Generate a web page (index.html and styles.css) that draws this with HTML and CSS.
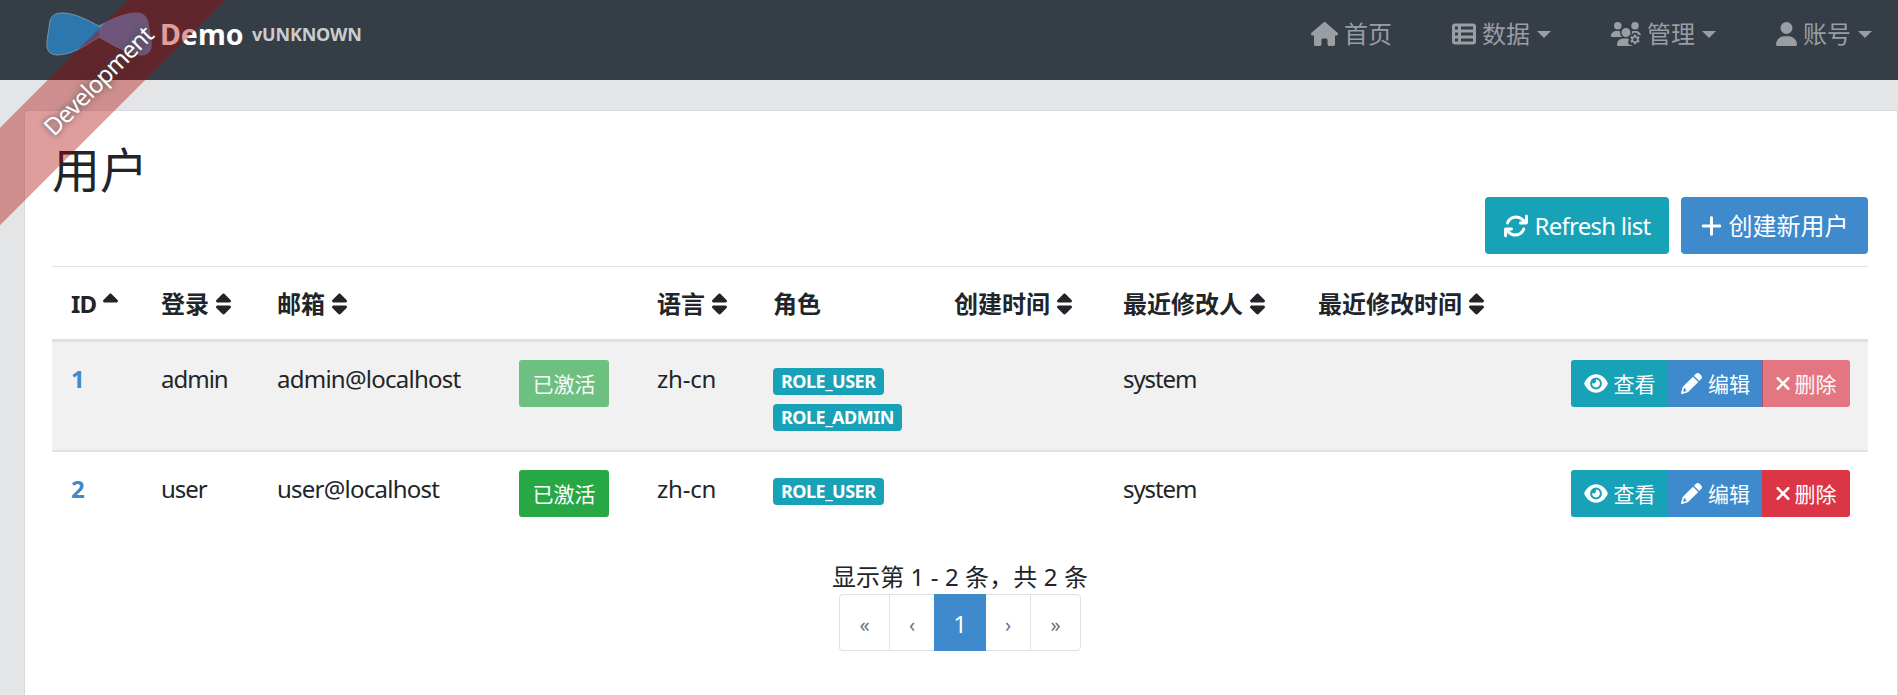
FILE: index.html
```html
<!DOCTYPE html>
<html lang="zh-CN">
<head>
<meta charset="utf-8">
<title>用户</title>
<link rel="stylesheet" href="styles.css">
</head>
<body>
<svg class="defs" aria-hidden="true">
  <symbol id="home" viewBox="0 0 576 512"><path d="M575.8 255.5c0 18-15 32.1-32 32.1h-32l.7 160.2c0 2.7-.2 5.4-.5 8.1V472c0 22.1-17.9 40-40 40H456c-1.1 0-2.2 0-3.3-.1c-1.4 .1-2.8 .1-4.2 .1H416 392c-22.1 0-40-17.9-40-40V448 384c0-17.7-14.3-32-32-32H256c-17.7 0-32 14.3-32 32v64 24c0 22.1-17.9 40-40 40H160 128.1c-1.5 0-3-.1-4.5-.2c-1.2 .1-2.4 .2-3.6 .2H104c-22.1 0-40-17.9-40-40V360c0-.9 0-1.9 .1-2.8V287.6H32c-18 0-32-14-32-32.1c0-9 3-17 10-24L266.4 8c7-7 15-8 22-8s15 2 21 7L564.8 231.5c8 7 12 15 11 24z"/></symbol>
  <symbol id="list" viewBox="0 0 512 512"><path fill-rule="evenodd" d="M64 32H448a64 64 0 0 1 64 64V416a64 64 0 0 1-64 64H64a64 64 0 0 1-64-64V96A64 64 0 0 1 64 32zM64 96v64h64V96zM192 96v64h256V96zM64 224v64h64V224zM192 224v64h256V224zM64 352v64h64V352zM192 352v64h256V352z"/></symbol>
  <symbol id="users" viewBox="0 0 640 512"><path d="M144 160A80 80 0 1 0 144 0a80 80 0 1 0 0 160zm368 0A80 80 0 1 0 512 0a80 80 0 1 0 0 160zM0 298.700C0 310.400 9.600 320 21.300 320H234.700c.200 0 .400 0 .700 0c-26.600-23.500-43.300-57.800-43.300-96c0-7.600 .700-15 1.900-22.300c-13.600-6.300-28.700-9.700-44.600-9.700H106.700C47.800 192 0 239.800 0 298.700zM320 320c24 0 45.900-8.800 62.700-23.300c2.500-3.700 5.200-7.300 8-10.700c2.700-3.300 5.700-6.100 9-8.300C410 262.300 416 243.900 416 224c0-53-43-96-96-96s-96 43-96 96s43 96 96 96zm65.400 60.200c-10.300-5.900-18.100-16.200-20.800-28.200H261.300C187.700 352 128 411.700 128 485.300c0 14.700 11.900 26.700 26.700 26.700H455.200c-2.100-5.200-3.200-10.900-3.200-16.400v-3c-1.300-.700-2.700-1.500-4-2.300l-2.600 1.500c-16.800 9.700-40.500 8-54.700-9.700c-4.500-5.600-8.600-11.500-12.400-17.600l-.100-.200-.100-.200-2.400-4.100-.100-.200-.100-.200c-3.400-6.200-6.400-12.600-9-19.300c-8.200-21.200 2.200-42.600 19-52.300l2.700-1.500c0-.800 0-1.500 0-2.300s0-1.500 0-2.300zM533.300 192H490.700c-15.900 0-31 3.500-44.600 9.700c1.300 7.200 1.900 14.700 1.900 22.300c0 17.400-3.500 33.900-9.700 49c2.500 .900 4.900 2 7.100 3.300l2.600 1.500c1.300-.800 2.600-1.600 4-2.300v-3c0-19.400 13.300-39.100 35.800-42.600c7.900-1.200 16-1.900 24.200-1.900s16.300 .600 24.200 1.900c22.500 3.500 35.800 23.200 35.800 42.600v3c1.300 .700 2.700 1.500 4 2.300l2.600-1.500c16.800-9.700 40.500-8 54.700 9.700c2.300 2.800 4.500 5.800 6.600 8.700C637.100 236 590.600 192 533.300 192z"/><path fill-rule="evenodd" d="M490 269h44l5 33 20 11 31-12 22 38-26 21v24l26 21-22 38-31-12-20 11-5 33h-44l-5-33-20-11-31 12-22-38 26-21v-24l-26-21 22-38 31 12 20-11zM512 332a40 40 0 1 0 0 80 40 40 0 1 0 0-80z"/></symbol>
  <symbol id="user" viewBox="0 0 448 512"><path d="M224 256A128 128 0 1 0 224 0a128 128 0 1 0 0 256zm-45.700 48C79.800 304 0 383.800 0 482.300C0 498.700 13.300 512 29.700 512H418.300c16.400 0 29.700-13.300 29.700-29.700C448 383.800 368.200 304 269.700 304H178.300z"/></symbol>
  <symbol id="sort" viewBox="0 0 320 512"><path d="M137.400 41.400c12.500-12.500 32.800-12.500 45.300 0l128 128c9.200 9.200 11.900 22.900 6.900 34.900s-16.600 19.800-29.600 19.800H32c-12.900 0-24.600-7.800-29.600-19.800s-2.200-25.700 6.900-34.900l128-128zm0 429.300l-128-128c-9.200-9.200-11.900-22.900-6.900-34.900s16.600-19.800 29.600-19.800H288c12.900 0 24.600 7.800 29.600 19.800s2.200 25.700-6.900 34.900l-128 128c-12.500 12.500-32.800 12.500-45.300 0z"/></symbol>
  <symbol id="sort-up" viewBox="0 0 320 512"><path d="M182.600 41.400c-12.500-12.500-32.800-12.500-45.300 0l-128 128c-9.200 9.200-11.900 22.900-6.900 34.900s16.600 19.800 29.600 19.800H288c12.900 0 24.600-7.800 29.600-19.800s2.200-25.700-6.900-34.900l-128-128z"/></symbol>
  <symbol id="plus" viewBox="0 0 448 512"><path d="M256 80c0-17.700-14.300-32-32-32s-32 14.300-32 32V224H48c-17.700 0-32 14.300-32 32s14.300 32 32 32H192V432c0 17.700 14.300 32 32 32s32-14.300 32-32V288H400c17.700 0 32-14.300 32-32s-14.300-32-32-32H256V80z"/></symbol>
  <symbol id="times" viewBox="0 0 320 512"><path d="M310.600 150.600c12.500-12.500 12.500-32.800 0-45.300s-32.800-12.500-45.300 0L160 210.700 54.600 105.400c-12.500-12.500-32.800-12.500-45.300 0s-12.500 32.800 0 45.300L114.700 256 9.400 361.400c-12.500 12.500-12.500 32.800 0 45.300s32.800 12.500 45.300 0L160 301.300 265.400 406.600c12.500 12.500 32.800 12.500 45.300 0s12.500-32.800 0-45.300L205.300 256 310.600 150.600z"/></symbol>
  <symbol id="eye" viewBox="0 0 576 512"><path d="M288 32c-80.800 0-145.500 36.800-192.600 80.600C48.600 156 17.300 208 2.500 243.700c-3.300 7.900-3.300 16.700 0 24.600C17.300 304 48.600 356 95.400 399.400C142.500 443.200 207.200 480 288 480s145.500-36.800 192.600-80.600c46.800-43.500 78.100-95.400 93-131.100c3.300-7.900 3.300-16.700 0-24.600c-14.900-35.700-46.200-87.700-93-131.100C433.500 68.800 368.800 32 288 32zM144 256a144 144 0 1 1 288 0 144 144 0 1 1 -288 0zm144-64c0 35.300-28.700 64-64 64c-7.100 0-13.900-1.200-20.300-3.300c-5.500-1.800-11.900 1.600-11.700 7.400c.300 6.900 1.300 13.800 3.200 20.700c13.700 51.200 66.400 81.600 117.600 67.900s81.600-66.400 67.900-117.600c-11.100-41.500-47.800-69.400-88.600-71.100c-5.800-.200-9.200 6.100-7.400 11.700c2.100 6.400 3.300 13.200 3.300 20.300z"/></symbol>
  <symbol id="pencil" viewBox="0 0 512 512"><path fill-rule="evenodd" d="M362.700 19.300L314.300 67.700 444.300 197.700 492.700 149.300c25-25 25-65.500 0-90.500L453.300 19.300c-25-25-65.500-25-90.500 0zM291.700 90.300L58.600 323.500c-10.400 10.400-18 23.300-22.200 37.400L1 481.200C-1.500 489.700 .8 498.800 7 505s15.300 8.500 23.700 6.100l120.300-35.400c14.100-4.200 27-11.800 37.400-22.200L421.700 220.300 291.700 90.300zM112 390v26c0 8 4 13 12 13h25l-12 11-67 20-18-18 20-67 12-11z"/></symbol>
  <symbol id="sync" viewBox="0 0 512 512"><path d="M105.100 202.600c7.700-21.800 20.200-42.300 37.800-59.800c62.500-62.500 163.800-62.500 226.300 0L386.300 160H352c-17.700 0-32 14.300-32 32s14.300 32 32 32H463.500c17.700 0 48-14.300 48-32V50c0-17.700-14.300-32-32-32s-32 14.300-32 32v65.200L414.400 97.600c-87.500-87.500-229.300-87.500-316.800 0C73.200 122 55.600 150.700 44.800 181.400c-5.900 16.700 2.900 34.900 19.500 40.800s34.900-2.900 40.800-19.500zM39 289.300c-15 1.500-30 10-38 26V462c0 17.700 14.300 32 32 32s32-14.300 32-32V396.900l17.600 17.500c87.500 87.400 229.300 87.400 316.700 0c24.400-24.400 42.100-53.100 52.900-83.700c5.900-16.700-2.900-34.900-19.500-40.800s-34.900 2.900-40.800 19.500c-7.700 21.800-20.200 42.300-37.800 59.800c-62.500 62.500-163.800 62.500-226.300 0L125.600 352H160c17.700 0 32-14.300 32-32s-14.300-32-32-32H48.400z"/></symbol>
</svg>
<div class="ribbon"><span>Development</span></div>
<nav class="navbar">
  <a class="brand">
    <svg class="logo" viewBox="0 0 108 46"><path d="M5 10C7 3 11 2 19 2 32 3 42 9 54 15 66 9 76 3 90 2 99 2 101 5 103 12L106 30C107 39 104 44 96 44 80 42 68 34 54 26 40 35 28 43 13 44 4 44 1 39 2 30Z" fill="#2c77ad" stroke="#7f929f" stroke-width="1"/><path d="M54 15C66 9 76 3 90 2 99 2 101 5 103 12L106 30C107 39 104 44 96 44 80 42 68 34 54 26Z" fill="#478cc4"/></svg>
    <b class="name">Demo</b><b class="ver">vUNKNOWN</b>
  </a>
  <ul class="menu">
    <li class="m1"><svg class="w27"><use href="#home"/></svg><span>首页</span></li>
    <li class="m2"><svg class="w24"><use href="#list"/></svg><span>数据</span><i class="caret"></i></li>
    <li class="m3"><svg class="w30"><use href="#users"/></svg><span>管理</span><i class="caret"></i></li>
    <li class="m4"><svg class="w21"><use href="#user"/></svg><span>账号</span><i class="caret"></i></li>
  </ul>
</nav>
<main class="card">
  <h2>用户</h2>
  <div class="actions">
    <button class="btn info refresh"><svg class="w24"><use href="#sync"/></svg><span class="latin">Refresh list</span></button>
    <button class="btn primary create"><svg class="w21"><use href="#plus"/></svg><span>创建新用户</span></button>
  </div>
  <table>
    <colgroup><col class="c1"><col class="c2"><col class="c3"><col class="c4"><col class="c5"><col class="c6"><col class="c7"><col class="c8"><col class="c9"><col></colgroup>
    <thead><tr>
      <th><span class="latin">ID</span><svg class="sort"><use href="#sort-up"/></svg></th>
      <th>登录<svg class="sort"><use href="#sort"/></svg></th>
      <th>邮箱<svg class="sort"><use href="#sort"/></svg></th>
      <th></th>
      <th>语言<svg class="sort"><use href="#sort"/></svg></th>
      <th>角色</th>
      <th>创建时间<svg class="sort"><use href="#sort"/></svg></th>
      <th>最近修改人<svg class="sort"><use href="#sort"/></svg></th>
      <th>最近修改时间<svg class="sort"><use href="#sort"/></svg></th>
      <th></th>
    </tr></thead>
    <tbody>
      <tr class="odd">
        <td class="id">1</td><td class="latin name-cell">admin</td><td class="latin">admin@localhost</td>
        <td><button class="btn sm success faded">已激活</button></td>
        <td class="lang">zh-cn</td>
        <td><div class="role"><span class="badge">ROLE_USER</span></div><div class="role"><span class="badge">ROLE_ADMIN</span></div></td>
        <td></td><td class="latin by">system</td><td></td>
        <td><div class="group"><button class="btn sm info view"><svg><use href="#eye"/></svg><span>查看</span></button><button class="btn sm primary edit"><svg><use href="#pencil"/></svg><span>编辑</span></button><button class="btn sm danger del faded"><svg><use href="#times"/></svg><span>删除</span></button></div></td>
      </tr>
      <tr>
        <td class="id">2</td><td class="latin name-cell">user</td><td class="latin">user@localhost</td>
        <td><button class="btn sm success">已激活</button></td>
        <td class="lang">zh-cn</td>
        <td><div class="role"><span class="badge">ROLE_USER</span></div></td>
        <td></td><td class="latin by">system</td><td></td>
        <td><div class="group"><button class="btn sm info view"><svg><use href="#eye"/></svg><span>查看</span></button><button class="btn sm primary edit"><svg><use href="#pencil"/></svg><span>编辑</span></button><button class="btn sm danger del"><svg><use href="#times"/></svg><span>删除</span></button></div></td>
      </tr>
    </tbody>
  </table>
  <div class="count">显示第 1 - 2 条，共 2 条</div>
  <ul class="pages"><li class="p1">«</li><li class="p2">‹</li><li class="p3">1</li><li class="p4">›</li><li class="p5">»</li></ul>
</main>
</body>
</html>
```

FILE: styles.css
```css
* { box-sizing: border-box; }
body {
  margin: 0; height: 695px; overflow: hidden; background: #e4e5e6; color: #212529;
  font: 24px/36px "Noto Sans", "Noto Sans CJK SC", sans-serif;
}
svg { fill: currentColor; flex: none; }
.defs { position: absolute; width: 0; height: 0; }
ul { list-style: none; margin: 0; padding: 0; display: flex; }
.latin { letter-spacing: -.75px; }

.ribbon {
  position: absolute; z-index: 5; left: -86px; top: 45px; width: 366px; height: 69px;
  background: rgba(170, 0, 0, .38); color: #fff; transform: rotate(-45deg);
  line-height: 72px; text-align: center; text-shadow: 0 0 6px #444; font-size: 24px; letter-spacing: -.8px;
}

.navbar { height: 80px; background: #353d47; display: flex; justify-content: space-between; padding: 0 26px 0 45px; }
.brand { display: flex; align-items: center; height: 67px; color: #fff; }
.logo { width: 108px; height: 46px; margin-right: 7px; }
.name { font-size: 28.5px; width: 92px; }
.ver { font-size: 18px; color: #ccc; letter-spacing: -.2px; }
.menu { height: 68px; align-items: center; color: #9a9ea3; }
.menu li { display: flex; align-items: center; white-space: nowrap; }
.menu svg { height: 24px; margin-right: 6px; }
.m2, .m3, .m4 { margin-left: 60px; }
.w21 { width: 21px; } .w24 { width: 24px; } .w27 { width: 27px; } .w30 { width: 30px; }
.caret { border: 7.200px solid transparent; border-top-color: currentColor; border-bottom: 0; margin-left: 7px; }

.card { margin: 30px 0 0 24px; width: 1874px; height: 585px; background: #fff; border: 1px solid #d8dbdf; border-bottom: 0; border-radius: 4px 4px 0 0; padding: 28px 29px 0 27px; }
h2 { font-size: 48px; line-height: 62px; height: 58px; font-weight: 400; margin: 0; }
.actions { display: flex; justify-content: flex-end; gap: 12px; height: 69px; }
.btn { border: 0; border-radius: 4px; color: #fff; font: inherit; padding: 0; display: flex; align-items: center; justify-content: center; white-space: nowrap; }
.actions .btn { height: 57px; gap: 7px; }
.actions svg { height: 24px; }
.refresh { width: 184px; }
.create { width: 187px; }
.info { background: #17a2b8; }
.primary { background: #3e8acc; }
.success { background: #28a745; }
.danger { background: #dc3545; }
.faded { opacity: .65; }

table { width: 1816px; table-layout: fixed; border-collapse: separate; border-spacing: 0; }
.c1 { width: 91px; } .c2 { width: 116px; } .c3 { width: 242px; } .c4 { width: 138px; } .c5 { width: 116px; }
.c6 { width: 181px; } .c7 { width: 168px; } .c8 { width: 195px; } .c9 { width: 200px; }
th { height: 76px; border-top: 1px solid #dee2e6; border-bottom: 3px solid #dee2e6; padding: 2px 0 0 18px; text-align: left; white-space: nowrap; vertical-align: middle; }
th:first-child, th:nth-child(8), th:nth-child(9) { padding-left: 19px; }
td { padding: 18px 0 0 18px; vertical-align: top; white-space: nowrap; height: 108px; }
td.id, td.latin, td.lang { padding-top: 19px; }
.odd td { height: 110px; background: #f1f1f1; border-bottom: 2px solid #dee2e6; }
.sort { width: 15px; height: 24px; vertical-align: -3px; margin-left: 7px; }
td.id { color: #3e8acc; font-weight: 700; padding-left: 19px; }
.lang { letter-spacing: -.2px; }
td.name-cell { letter-spacing: -1px; }
td.by { letter-spacing: -1.1px; padding-left: 19px; }
.sm { height: 47px; font-size: 21px; width: 90px; border-radius: 3px; }
.role { height: 36px; display: flex; padding-top: 8px; }
.badge { height: 27px; border-radius: 4px; background: #17a2b8; color: #fff; font-size: 18px; line-height: 27px; font-weight: 700; padding: 0 8px; letter-spacing: -.5px; }
.group { display: flex; justify-content: flex-end; padding-right: 18px; }
.group .btn { gap: 6px; border-radius: 0; }
.group svg { height: 21px; width: 24px; }
.group .view { width: 97px; border-radius: 3px 0 0 3px; }
.group .edit { width: 95px; margin-right: -1px; }
.group .del { width: 88px; border-radius: 0 3px 3px 0; gap: 5px; }
.group .edit svg { width: 21px; }
.group .del svg { width: 14px; }

.count { text-align: center; height: 34px; letter-spacing: .1px; line-height: 34px; }
.pages { justify-content: center; }
.pages li { height: 57px; border: 1px solid #dee2e6; border-right: 0; color: #6c757d; text-align: center; line-height: 60px; font-size: 20px; }
.pages .p1 { width: 50px; border-radius: 4px 0 0 4px; }
.pages .p2 { width: 45px; }
.pages .p3 { width: 52px; background: #3e8acc; color: #fff; border: 0; font-size: 24px; }
.pages .p4 { width: 44px; border-left: 0; }
.pages .p5 { width: 51px; border-right: 1px solid #dee2e6; border-radius: 0 4px 4px 0; }
```
